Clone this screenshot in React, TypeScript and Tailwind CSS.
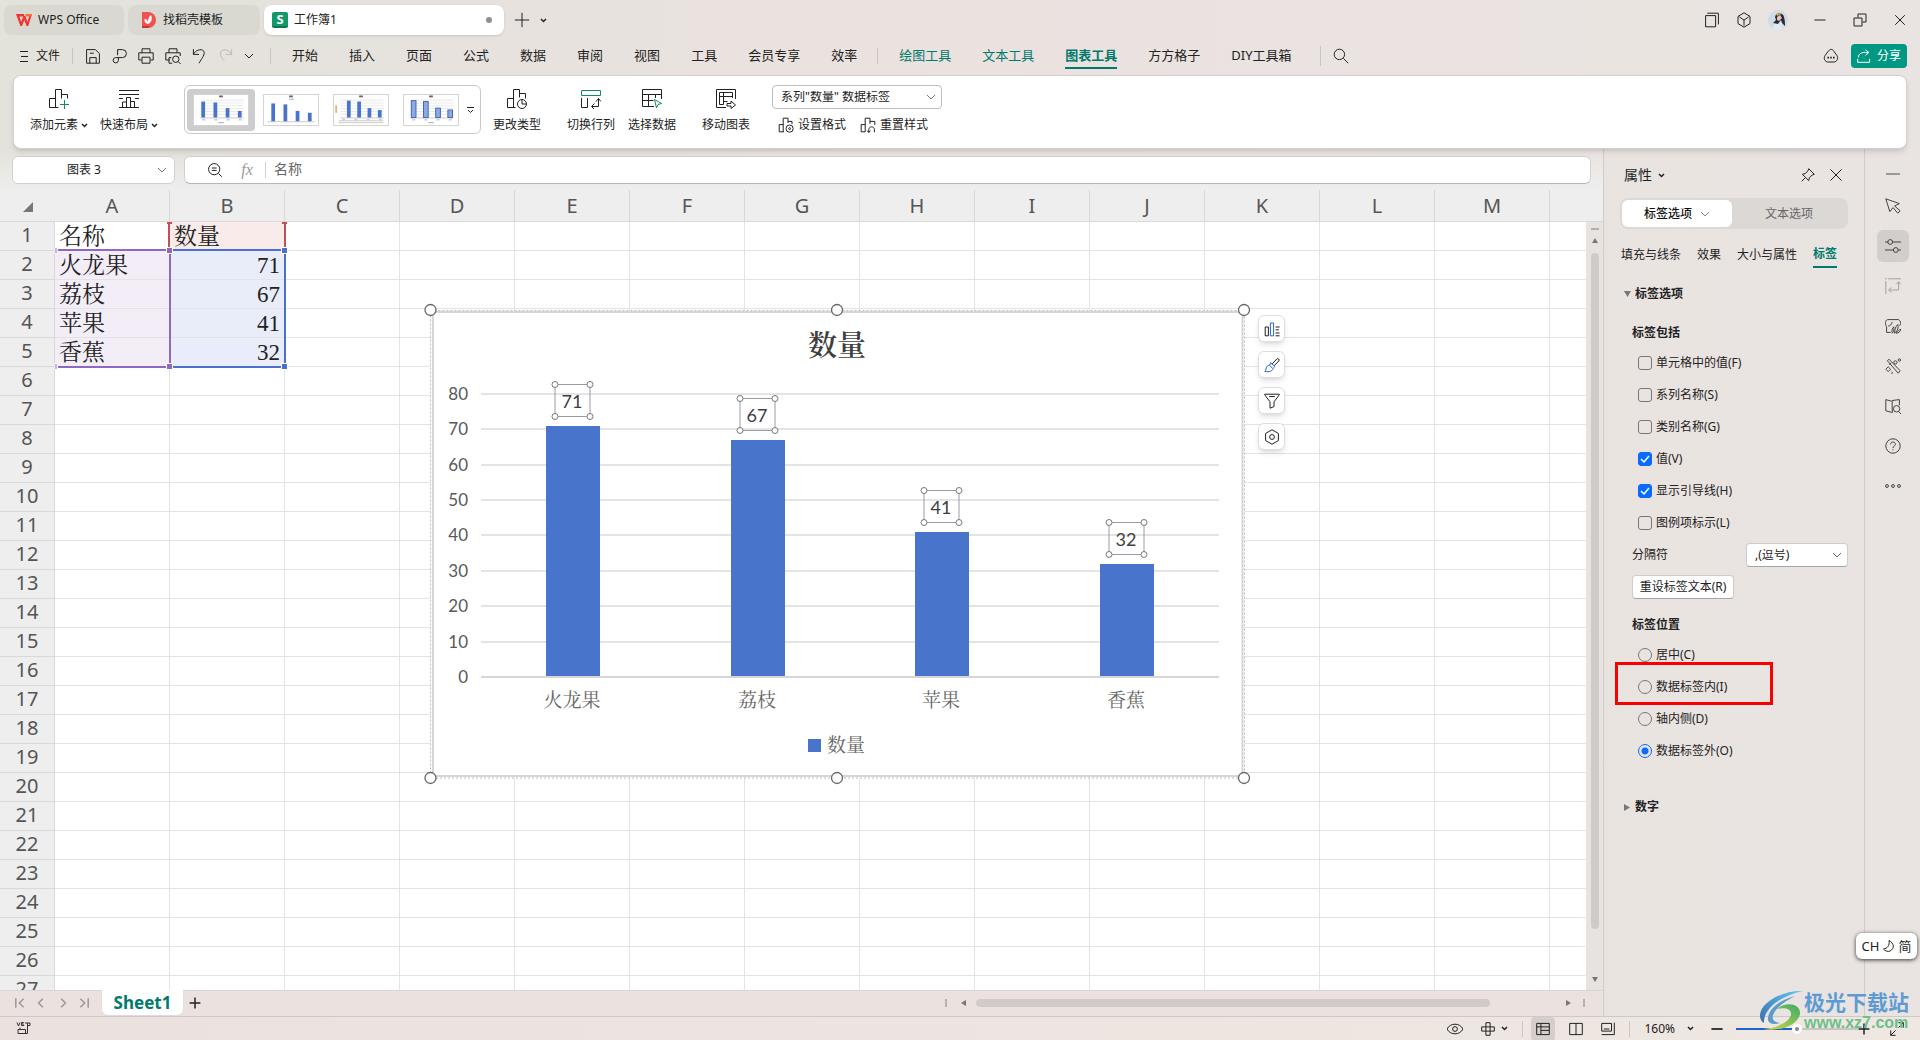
import { useState } from 'react';
import type { ReactNode } from 'react';

const columns = ['A', 'B', 'C', 'D', 'E', 'F', 'G', 'H', 'I', 'J', 'K', 'L', 'M'];
const rowNumbers = Array.from({ length: 27 }, (_, i) => i + 1);

const fruits = [
  { name: '火龙果', value: 71 },
  { name: '荔枝', value: 67 },
  { name: '苹果', value: 41 },
  { name: '香蕉', value: 32 },
];

interface IconProps {
  size?: number;
  className?: string;
  children: ReactNode;
}

function Icon({ size = 20, className = '', children }: IconProps) {
  return (
    <svg
      width={size}
      height={size}
      viewBox="0 0 20 20"
      fill="none"
      stroke="currentColor"
      strokeWidth={20 / size}
      className={`shrink-0 ${className}`}
      aria-hidden="true"
    >
      {children}
    </svg>
  );
}

function Chevron({ className = '' }: { className?: string }) {
  return (
    <svg width="10" height="6" viewBox="0 0 10 6" fill="none" stroke="currentColor" className={`shrink-0 ${className}`} aria-hidden="true">
      <path d="M1 1l4 4 4-4" />
    </svg>
  );
}

function SmallChevron({ className = '' }: { className?: string }) {
  return (
    <svg width="7" height="5" viewBox="0 0 7 5" fill="none" stroke="currentColor" strokeWidth="1.5" className={`shrink-0 ${className}`} aria-hidden="true">
      <path d="M1 1l2.500 2.500L6 1" />
    </svg>
  );
}

function TitleBar() {
  return (
    <div className="flex h-10 items-center pr-3 pl-1 text-xs">
      <button className="flex h-[30px] w-[120px] items-center gap-1.5 rounded-lg bg-[#d9d8d1] pl-3">
        <svg width="16" height="12" viewBox="0 0 16 12" aria-hidden="true">
          <path d="M0 0h8v2.4H3.4L5.2 8 7.4 2h2l2 6L14 0h2l-3.8 12h-1.6L8.3 6 6 12H4.4z" fill="#f5312f" />
          <path d="M9.2 0H16l-.8 2.4H10z" fill="#ff6a3d" />
        </svg>
        WPS Office
      </button>
      <button className="ml-1 flex h-[30px] w-[132px] items-center gap-[7px] rounded-lg bg-[#d9d8d1] pl-[13px]">
        <svg width="15" height="16" viewBox="0 0 15 16" aria-hidden="true">
          <path d="M1 0h6a8 8 0 0 1 0 16H1z" fill="#f0524f" />
          <path d="M1 14h8l-2 2H1z" fill="#c93438" />
          <path d="M7 12C3.500 11 3 8.500 4 6.500c1.500 1 2.500 2 3 3.500 0-2.500.5-5 3-7 1.500 3.500 1 7-3 9z" fill="#fff" />
        </svg>
        找稻壳模板
      </button>
      <button className="ml-1 flex h-[30px] w-[240px] items-center gap-1.5 rounded-lg bg-white pr-3 pl-2 shadow-sm">
        <span className="flex size-4 items-center justify-center rounded-xs border-b-2 border-[#0b7a4f] bg-[#129968] text-[13px] leading-none font-bold text-white">S</span>
        工作簿1
        <span className="ml-auto size-1.5 rounded-full bg-[#8f8f8f]" />
      </button>
      <button aria-label="新建标签" className="ml-2 p-0.5">
        <Icon size={16}><path d="M10 1v18M1 10h18" /></Icon>
      </button>
      <button aria-label="标签列表" className="ml-2"><SmallChevron /></button>

      <div className="ml-auto flex items-center">
        <button aria-label="窗口"><Icon size={16}><path d="M2 4.500h12.500v14H2zM4 1.500h14v14" /></Icon></button>
        <button aria-label="应用" className="ml-4"><Icon size={16}><path d="M10 1l7.500 4.500v9L10 19l-7.500-4.500v-9zM4 6l6 4 6-4M10 10v7" /></Icon></button>
        <button aria-label="用户" className="ml-4">
          <svg width="20" height="20" viewBox="0 0 20 20" className="overflow-hidden rounded-full" aria-hidden="true">
            <rect width="20" height="20" fill="#cddde6" />
            <path d="M4 20l3-9 6-1 2 10z" fill="#dfeaf0" />
            <path d="M7 7c1-5 8-5 9 0 1 4 1 7 1 9l-3-3-1-3-3 4-5-1 3-3z" fill="#2f2935" />
            <path d="M9 7l3-2 2 3-3 3-2-1z" fill="#e9c4b4" />
            <path d="M8 4l4-1 2 1-5 2z" fill="#c9a04e" />
          </svg>
        </button>
        <button aria-label="最小化" className="ml-6"><Icon size={16}><path d="M3 10h14" /></Icon></button>
        <button aria-label="还原" className="ml-6"><Icon size={16}><path d="M2.500 7.500h10v10h-10zM7.500 7V2.500h10v10H13" /></Icon></button>
        <button aria-label="关闭" className="ml-6"><Icon size={16}><path d="M4 4l12 12M16 4L4 16" /></Icon></button>
      </div>
    </div>
  );
}

const menuItems = ['开始', '插入', '页面', '公式', '数据', '审阅', '视图', '工具', '会员专享', '效率'];

function MenuBar() {
  return (
    <div className="flex h-[31px] items-center pr-[13px] pl-5 text-[13px]">
      <button className="flex items-center gap-2 text-xs">
        <svg width="8" height="12" viewBox="0 0 8 12" stroke="currentColor" aria-hidden="true"><path d="M0 1.500h8M1 6.500h7M0 11.500h8" /></svg>
        文件
      </button>
      <span className="ml-3 h-4 w-px bg-[#c8c4c0]" />
      <div className="ml-3 flex w-[169px] items-center justify-between">
        <button aria-label="保存"><Icon size={16}><path d="M2 2h11l5 5v12H2zM6 19v-7h8v7M6 6.500h5" /></Icon></button>
        <button aria-label="输出"><Icon size={16}><path d="M7 9V2h6a5 5 0 0 1 0 10H4.500a3.300 3.300 0 1 0 3.500 3.500V12" /></Icon></button>
        <button aria-label="打印"><Icon size={16}><path d="M5 6V1h10v5M4.500 15H1V6h18v9h-3.500M5 11.500h10V19H5z" /></Icon></button>
        <button aria-label="打印预览"><Icon size={16}><path d="M5 6V1h10v5M6 15H1V6h18v4M9 19H5v-7h3" /><circle cx="13.500" cy="14" r="4" /><path d="M16.500 17l3 3" /></Icon></button>
        <button aria-label="撤销"><Icon size={16}><path d="M3 1.500V8h7M3 8c2-5 10-8 13-4 2 4-2 8-6 15" /></Icon></button>
        <button aria-label="恢复" className="text-[#bdb9b6]"><Icon size={16}><path d="M17 1.500V8h-7M17 8C15 3 7 0 4 4c-2 4 0 8 4 12" /></Icon></button>
        <button aria-label="更多"><Chevron /></button>
      </div>
      <span className="ml-4 h-4 w-px bg-[#c8c4c0]" />
      <nav className="ml-[21px] flex items-center gap-[31px] whitespace-nowrap">
        {menuItems.map((item) => (
          <button key={item}>{item}</button>
        ))}
      </nav>
      <span className="ml-5 h-4 w-px bg-[#c8c4c0]" />
      <nav className="ml-[21px] flex items-center gap-[31px] whitespace-nowrap">
        <button className="text-[#007a6b]">绘图工具</button>
        <button className="text-[#007a6b]">文本工具</button>
        <button className="border-y-2 border-t-transparent border-b-[#007a6b] pt-0.5 pb-0.5 font-bold text-[#007a6b]">图表工具</button>
        <button>方方格子</button>
        <button>DIY工具箱</button>
      </nav>
      <span className="ml-7 h-5 w-px bg-[#c8c4c0]" />
      <button aria-label="搜索" className="ml-3">
        <Icon size={16}><circle cx="8" cy="8" r="6.500" /><path d="M13 13l6 6" /></Icon>
      </button>
      <button aria-label="云同步" className="ml-auto">
        <Icon size={16}><path d="M7 3.500c2-2.500 5-2.500 6.500.5l4 5.500c2 3.500 0 7.500-3.500 8H6c-4-.5-5.500-4.500-3.500-8z" /><path d="M5.500 12h2M9 12h2M12.500 12h2" strokeWidth="2" /></Icon>
      </button>
      <button className="ml-3 flex h-6 w-14 items-center justify-center gap-1.5 rounded bg-[#009882] text-xs text-white">
        <Icon size={14}><path d="M2 12c0-5 4-8 14-7M12 1l5 4-5 4M1 14v5h17v-5" /></Icon>
        分享
      </button>
    </div>
  );
}

function RibbonButton({ label, icon, menu }: { label: string; icon: ReactNode; menu?: boolean }) {
  return (
    <button className="flex flex-col items-center gap-[7px] whitespace-nowrap text-xs leading-[18px]">
      {icon}
      <span className="flex items-center gap-[3px]">
        {label}
        {menu && <SmallChevron />}
      </span>
    </button>
  );
}

function Divider() {
  return <span className="h-[66px] w-px bg-[#dcdcdc]" />;
}

const thumbBars: Record<number, number[]> = {
  0: [17, 16, 10, 7],
  1: [19, 18, 11, 9],
  2: [18, 17, 10, 8],
  3: [18, 17, 10, 8],
};

function Thumb({ kind }: { kind: number }) {
  return (
    <svg width="56" height="32" viewBox="0 0 56 32" className="border border-[#d4d4d4] bg-white" aria-hidden="true">
      <path d="M26 1.500h4" stroke="#666" strokeWidth="2" />
      {kind !== 1 && <path d="M6 5.500h46M6 8.500h46M6 11.500h46M6 14.500h46M6 17.500h46M6 20.500h46" stroke="#e6e6e6" />}
      {kind === 2 && <path d="M1.500 11v8" stroke="#d9b98a" strokeWidth="2" />}
      <path d={kind === 1 ? 'M3 28.500h50' : 'M6 24.500h46'} stroke="#c9c9c9" />
      {thumbBars[kind].map((h, i) => (
        <rect
          key={i}
          x={(kind === 2 ? 13 : 7) + i * (kind === 2 ? 11 : 13)}
          y={(kind === 1 ? 28 : 24) - h}
          width={kind === 3 ? 5 : 4}
          height={h}
          fill={kind === 3 ? '#8fa9e2' : '#4874cb'}
          stroke={kind === 3 ? '#3b64b5' : 'none'}
        />
      ))}
      {kind !== 1 && <path d="M8 26.500h3M21 26.500h3M34 26.500h3M47 26.500h3" stroke="#aaa" />}
      {kind === 2 && <path d="M4 27.500h48M4 29.500h48" stroke="#c9c9c9" />}
      {kind !== 2 && <path d={kind === 1 ? 'M26 4.500h5' : 'M25 29.500h6'} stroke="#9aa4b8" />}
    </svg>
  );
}

function Ribbon() {
  return (
    <div className="relative z-10 mx-[13px] mt-1 flex h-[74px] items-start rounded-lg border border-[#d5d0cd] bg-white pt-[3px] shadow-md">
      <div className="flex gap-3 pt-2.5 pl-4">
        <RibbonButton label="添加元素" menu icon={<Icon><path d="M.500 9.500h6v9M.500 9.500v9h9M6.500 18.500V.500h6v9M12.500 5.500h6v4" /><path d="M15.500 11v9M11 15.500h9" stroke="#128a62" /></Icon>} />
        <RibbonButton label="快速布局" menu icon={<Icon><path d="M0 1.500h20M0 5.500h20M0 9.500h4M16 9.500h4M0 18.500h20M3.500 18v-5h4M7.500 18V8.500h4V18M11.500 12.500h4V18" /></Icon>} />
      </div>
      <span className="ml-[13px]"><Divider /></span>
      <div className="mt-1.5 ml-[13px] flex h-[49px] items-center rounded-md border border-[#c9c9c9] pr-1.5 pl-0.5">
        {[0, 1, 2, 3].map((kind) => (
          <button key={kind} aria-label={`样式 ${kind + 1}`} className={`mr-0.5 rounded px-1.5 py-[5px] ${kind === 0 ? 'bg-[#cdcdcd]' : ''}`}>
            <Thumb kind={kind} />
          </button>
        ))}
        <button aria-label="更多样式">
          <svg width="7" height="8" viewBox="0 0 7 8" fill="none" stroke="currentColor" aria-hidden="true"><path d="M0 1.500h7M1 4l2.500 2.500L6 4" /></svg>
        </button>
      </div>
      <div className="ml-3 pt-2.5">
        <RibbonButton label="更改类型" icon={<Icon><path d="M.500 9.500h6v9M.500 9.500v9h8M6.500 18.500V.500h6v8M12.500 4.500h6v5" /><circle cx="15" cy="15" r="4.500" /><path d="M15 10.500V15h4.500" /></Icon>} />
      </div>
      <span className="ml-[13px]"><Divider /></span>
      <div className="flex gap-[13px] pt-2.5 pl-[13px]">
        <RibbonButton label="切换行列" icon={<Icon><path d="M.500 1.500h19v5H.500z" stroke="#128a62" /><path d="M.500 9v9.500h6V9M11 17.500h6.500V10M13.500 14.500l-3 3 3 3M15 12.500l2.500-3 2.500 3" /></Icon>} />
        <RibbonButton label="选择数据" icon={<Icon><path d="M12 17.500H.500v-17h19V10M.500 5.500h19M.500 11.500h11M6.500 5.500v12M13.500 5.500V9" /><path d="M12.500 10.500l7 4-3.500 1-1.500 3.500z" stroke="#128a62" /></Icon>} />
      </div>
      <span className="ml-[13px]"><Divider /></span>
      <div className="pt-2.5 pl-[13px]">
        <RibbonButton label="移动图表" icon={<Icon><path d="M10 18.500H.500V.500h19V10M3.500 15.500v-12h13v4h-13M7.500 3.500v12h-4M7.500 12.500h4M16.500 7v2" /><path d="M11 14.500h4V12l4.500 4-4.500 3.500V17h-4z" /></Icon>} />
      </div>
      <span className="ml-[13px]"><Divider /></span>
      <div className="pt-1.5 pl-[9px]">
        <div className="grid w-[170px] items-center">
          <select aria-label="图表元素" className="col-start-1 row-start-1 h-6 appearance-none rounded border border-[#bdbdbd] bg-white pl-2 text-xs leading-none">
            <option>系列"数量" 数据标签</option>
          </select>
          <Chevron className="pointer-events-none col-start-1 row-start-1 mr-1.5 justify-self-end text-[#777]" />
        </div>
        <div className="mt-[7px] flex gap-3.5 pl-1.5 text-xs leading-[18px]">
          <button className="flex items-center gap-1">
            <Icon size={16}><path d="M6.500 9.500h-5v9h6M6.500 18.500V1.500h6v6M12.500 5.500h5V9" /><circle cx="14.500" cy="14.500" r="4.500" /><circle cx="14.500" cy="14.500" r="1.200" /></Icon>
            设置格式
          </button>
          <button className="flex items-center gap-1">
            <Icon size={16}><path d="M6.500 9.500h-5v9h5M6.500 18.500V1.500h6v7M12.500 5.500h6V10M11 19v-3c0-5 7-5 7 0v3M9 17l2 2.500 2-2.500" /></Icon>
            重置样式
          </button>
        </div>
      </div>
    </div>
  );
}

function FormulaRow() {
  return (
    <div className="flex h-[41px] shrink-0 items-center gap-[9px] bg-linear-to-b from-transparent to-[#eee] px-3">
      <div className="flex h-7 w-[163px] items-center rounded-md border border-[#d3d0cd] bg-white pr-[7px]">
        <input aria-label="名称框" defaultValue="图表 3" className="w-full min-w-0 bg-transparent pr-0.5 text-center text-xs outline-none" />
        <Chevron className="text-[#777]" />
      </div>
      <div className="flex h-7 flex-1 items-center rounded-md border border-[#d3d0cd] border-b-[#b5b8b5] bg-white pl-[22px]">
        <button aria-label="查找">
          <Icon size={16}><circle cx="9" cy="9" r="7" /><path d="M14.500 14.500l4 4M6 7.500h6M6 10.500h6" /></Icon>
        </button>
        <button className="ml-4 w-4 font-['Liberation_Serif',serif] text-base leading-none text-[#999] italic">fx</button>
        <span className="ml-2.5 h-4 w-px bg-[#d0d0d0]" />
        <input aria-label="编辑栏" defaultValue="名称" className="ml-2 h-6 flex-1 bg-transparent pb-1 text-sm text-[#666] outline-none" />
      </div>
    </div>
  );
}

function ResizeHandle({ x, y }: { x: number; y: number }) {
  return <circle cx={x} cy={y} r="5.500" fill="#fff" stroke="#666" strokeWidth="1.300" />;
}

function Chart() {
  const baseline = 375;
  const left = 59;
  const right = 797;
  const unit = 3.54;
  const slot = (right - left) / fruits.length;

  return (
    <svg width="830" height="484" viewBox="0 0 830 484" className="absolute top-[112px] left-[422px]" role="img" aria-label="数量">
      <rect x="8.500" y="8.500" width="814" height="467.500" fill="#fff" stroke="#bdbdbd" strokeDasharray="2 2" />
      <rect x="11" y="10" width="809.500" height="464" fill="#fff" stroke="#d6d6d6" strokeWidth="2" />
      <text x="415" y="54" textAnchor="middle" fontSize="29" fontWeight="600" fill="#404040" fontFamily="'Noto Serif CJK SC','Noto Sans CJK SC',serif">数量</text>

      {[0, 10, 20, 30, 40, 50, 60, 70, 80].map((tick) => (
        <g key={tick}>
          <rect x={left} y={Math.round(baseline - tick * unit) - 1} width={right - left} height="2" fill={tick ? '#e4e4e4' : '#d6d6d6'} />
          <text x="46" y={Math.round(baseline - tick * unit) + 6} textAnchor="end" fontSize="17" fill="#595959" fontFamily="Lato,sans-serif">{tick}</text>
        </g>
      ))}

      {fruits.map((fruit, i) => {
        const center = Math.round(left + slot * (i + 0.5));
        const top = Math.round(baseline - fruit.value * unit);
        return (
          <g key={fruit.name}>
            <rect x={center - 27} y={top} width="54" height={baseline - 1 - top} fill="#4874cb" />
            <rect x={center - 18} y={top - 41.5} width="35" height="32" fill="none" stroke="#9a9aa6" />
            {[-18, 17].map((dx) =>
              [-41.5, -9.5].map((dy) => (
                <circle key={`${dx}${dy}`} cx={center + dx} cy={top + dy} r="3" fill="#fff" stroke="#777" />
              ))
            )}
            <text x={center - 1} y={top - 18} textAnchor="middle" fontSize="18" fill="#404040" fontFamily="Lato,sans-serif">{fruit.value}</text>
            <text x={center - 1} y="405" textAnchor="middle" fontSize="19" fill="#666" fontFamily="'Noto Serif CJK SC','Noto Sans CJK SC',serif">{fruit.name}</text>
          </g>
        );
      })}

      <rect x="386" y="437" width="13" height="13" fill="#4874cb" />
      <text x="405" y="450" fontSize="19" fill="#666" fontFamily="'Noto Serif CJK SC','Noto Sans CJK SC',serif">数量</text>

      {[8.5, 415, 822].map((x) => (
        <g key={x}>
          <ResizeHandle x={x} y={8} />
          <ResizeHandle x={x} y={476} />
        </g>
      ))}
    </svg>
  );
}

function ChartTools() {
  const button = 'flex size-[27px] items-center justify-center rounded-md border border-[#dedede] bg-white shadow-md';
  return (
    <div className="absolute top-[125px] left-[1258px] flex flex-col gap-[9px]">
      <button aria-label="图表元素" className={button}>
        <Icon size={16}><path d="M1.500 7.500h4v11h-4z" /><path d="M8 2.500h4v16H8z" stroke="#2b5fd9" /><path d="M14.500 7.500h5M14.500 11h4M14.500 15h5M14.500 18.500h5" /></Icon>
      </button>
      <button aria-label="图表样式" className={button}>
        <Icon size={16}><path d="M10 9l6-6.500c1.500-1.500 4 .5 2.500 2.500L12.500 11" /><path d="M8.500 7l5 5-2 2c-1 4-5 5-10.500 4 2-1 1-4 2.500-6 1-1.500 2.500-2 3.500-1.500zM7 10.500l3.500 3.500" stroke="#2b5fd9" /></Icon>
      </button>
      <button aria-label="图表筛选" className={button}>
        <Icon size={16}><path d="M1 1.500h18v1L12.500 11v6l-5 2v-8L1 2.500zM6.500 4.500h7" /></Icon>
      </button>
      <button aria-label="图表设置" className={button}>
        <Icon size={16}><path d="M10 1l8 4.500v9L10 19l-8-4.500v-9z" /><circle cx="10" cy="10" r="3" /></Icon>
      </button>
    </div>
  );
}

function RangeOutlines() {
  return (
    <svg width="290" height="184" className="pointer-events-none absolute top-0 left-0" aria-hidden="true">
      <path d="M169 34v26M285 34v26" stroke="#c44f52" strokeWidth="2" />
      <path d="M167 33h5M282 33h5" stroke="#c44f52" strokeWidth="2" />
      <path d="M58 60h111M170 60v116M58 177h111" stroke="#8f68bf" strokeWidth="2" />
      <path d="M173 60h109M285 63v111M173 177h109" stroke="#4a6fd0" strokeWidth="2" />
      <path d="M55 57.500h2v6h-2zM55 173.500h2v6h-2zM166.500 57.500h6v6h-6zM166.500 173.500h6v6h-6z" fill="#8f68bf" stroke="#fff" />
      <path d="M281.500 57.500h6v6h-6zM281.500 173.500h6v6h-6z" fill="#4a6fd0" stroke="#fff" />
    </svg>
  );
}

function cellText(column: string, row: number) {
  if (row === 1) return column === 'A' ? '名称' : column === 'B' ? '数量' : '';
  const fruit = fruits[row - 2];
  if (!fruit) return '';
  return column === 'A' ? fruit.name : column === 'B' ? fruit.value : '';
}

function cellStyle(column: string, row: number) {
  if (column === 'B' && row === 1) return 'bg-[#f8ebea]';
  if (row < 2 || row > 5) return '';
  if (column === 'A') return 'bg-[#f3edf8]';
  return column === 'B' ? 'bg-[#e9edfa] text-right' : '';
}

function Sheet() {
  return (
    <div className="flex min-h-0 flex-1">
      <div className="relative min-w-0 flex-1 overflow-hidden bg-white">
        <table className="w-full table-fixed border-separate border-spacing-0">
          <colgroup>
            <col className="w-[55px]" />
            {columns.map((c) => (
              <col key={c} className="w-[115px]" />
            ))}
            <col />
          </colgroup>
          <thead>
            <tr className="h-8 bg-[#eee] text-xl leading-[30px] text-[#555]">
              <th aria-label="全选" className="border-b border-[#d9d9d9] p-0">
                <svg width="10" height="10" viewBox="0 0 10 10" className="mt-0.5 ml-[23px]" aria-hidden="true"><path d="M10 0v10H0z" fill="#777" /></svg>
              </th>
              {columns.map((c) => (
                <th key={c} scope="col" className="border-r border-b border-[#d9d9d9] p-0 font-normal">{c}</th>
              ))}
              <th aria-label="N" className="border-b border-[#d9d9d9] p-0" />
            </tr>
          </thead>
          <tbody>
            {rowNumbers.map((row) => (
              <tr key={row} className="h-[29px]">
                <th scope="row" className="border-r border-b border-[#d9d9d9] bg-[#eee] p-0 pb-0.5 text-xl leading-[26px] font-normal text-[#555]">{row}</th>
                {columns.map((c) => (
                  <td
                    key={c}
                    className={`border-r border-b border-[#e3e3e3] p-0 pt-0.5 pr-1 pl-1 font-['Liberation_Serif','Noto_Serif_CJK_SC','Noto_Sans_CJK_SC',serif] text-[23px] leading-[26px] ${cellStyle(c, row)}`}
                  >
                    {cellText(c, row)}
                  </td>
                ))}
                <td className="border-b border-[#e3e3e3] p-0" />
              </tr>
            ))}
          </tbody>
        </table>
        <RangeOutlines />
        <Chart />
        <ChartTools />
      </div>

      <div className="flex w-[17px] flex-col items-center bg-[#eee]">
        <span className="h-8 w-full border-b border-[#d9d9d9]" />
        <div className="flex w-full flex-1 flex-col items-center bg-[#e9e3e0] pt-1.5 pb-2">
          <span className="h-0.5 w-2 bg-[#b5b1ae]" />
          <svg width="6" height="5" viewBox="0 0 6 5" className="mt-2" aria-hidden="true"><path d="M3 0l3 5H0z" fill="#777" /></svg>
          <span className="mt-2.5 mb-12 w-2 flex-1 rounded-full bg-[#d0cbc8]" />
          <svg width="6" height="5" viewBox="0 0 6 5" aria-hidden="true"><path d="M0 0h6L3 5z" fill="#777" /></svg>
        </div>
      </div>
    </div>
  );
}

function SheetTabs() {
  return (
    <div className="flex h-[26px] shrink-0 items-start border-t border-[#d9d5d2] bg-[#ebe2e0] pl-3.5">
      <div className="flex h-6 w-[76px] items-center justify-between text-[#999]">
        <button aria-label="第一个"><Icon size={12}><path d="M3 2v16M16 3L9 10l7 7" strokeWidth="2.500" /></Icon></button>
        <button aria-label="上一个"><Icon size={12}><path d="M13 3l-7 7 7 7" strokeWidth="2.500" /></Icon></button>
        <button aria-label="下一个"><Icon size={12}><path d="M7 3l7 7-7 7" strokeWidth="2.500" /></Icon></button>
        <button aria-label="最后一个"><Icon size={12}><path d="M17 2v16M4 3l7 7-7 7" strokeWidth="2.500" /></Icon></button>
      </div>
      <button className="-mt-px ml-3 h-[25px] w-[81px] rounded-b-md bg-white text-[17px] leading-6 font-bold text-[#007a6b] shadow-xs">Sheet1</button>
      <button aria-label="新建工作表" className="mt-1.5 ml-1.5"><Icon size={12}><path d="M10 1v18M1 10h18" strokeWidth="2.500" /></Icon></button>
      <div className="ml-auto flex h-6 w-[658px] items-center pr-[18px]">
        <span className="h-2 w-0.5 bg-[#b5b1ae]" />
        <svg width="5" height="6" viewBox="0 0 5 6" className="ml-3.5" aria-hidden="true"><path d="M5 0v6L0 3z" fill="#777" /></svg>
        <span className="mr-[76px] ml-2.5 h-2 flex-1 rounded-full bg-[#d0cbc8]" />
        <svg width="5" height="6" viewBox="0 0 5 6" aria-hidden="true"><path d="M0 0v6l5-3z" fill="#777" /></svg>
        <span className="ml-3 h-2 w-0.5 bg-[#b5b1ae]" />
      </div>
    </div>
  );
}

function CheckRow({ label, defaultChecked }: { label: string; defaultChecked?: boolean }) {
  return (
    <label className="flex h-8 items-center gap-1">
      <span className="grid place-items-center">
        <input
          type="checkbox"
          defaultChecked={defaultChecked}
          className="peer col-start-1 row-start-1 size-3.5 appearance-none rounded-[3px] border border-[#777] checked:border-[#0a6cff] checked:bg-[#0a6cff]"
        />
        <svg width="10" height="8" viewBox="0 0 10 8" fill="none" stroke="#fff" strokeWidth="1.500" className="pointer-events-none invisible col-start-1 row-start-1 peer-checked:visible" aria-hidden="true">
          <path d="M1 4l3 3 5-6" />
        </svg>
      </span>
      {label}
    </label>
  );
}

function PropertiesPanel() {
  const [position, setPosition] = useState('数据标签外(O)');
  const checks = [
    { label: '单元格中的值(F)' },
    { label: '系列名称(S)' },
    { label: '类别名称(G)' },
    { label: '值(V)', on: true },
    { label: '显示引导线(H)', on: true },
    { label: '图例项标示(L)' },
  ];

  return (
    <aside className="w-[261px] shrink-0 border-l border-[#d0ccc9] px-4 text-xs">
      <div className="flex h-[49px] items-center pt-[3px] pr-[5px] pl-1">
        <button className="flex items-center gap-1.5 text-sm">属性 <SmallChevron /></button>
        <button aria-label="固定" className="ml-auto"><Icon size={14}><path d="M11 1l8 8-3 1-4 4-1 4-9-9 4-1 4-4zM6 14l-5 5" /></Icon></button>
        <button aria-label="关闭" className="ml-3.5"><Icon size={14}><path d="M2 2l16 16M18 2L2 18" /></Icon></button>
      </div>

      <div className="flex h-[31px] rounded-lg bg-[#dcd8d5] p-0.5">
        <button className="flex w-[110px] items-center justify-center gap-2 rounded-md bg-white font-medium text-[#111]">
          标签选项 <Chevron className="text-[#888]" />
        </button>
        <button className="flex-1 text-[#666]">文本选项</button>
      </div>

      <div className="mt-[13px] flex gap-4 pl-px leading-6 whitespace-nowrap">
        <button>填充与线条</button>
        <button>效果</button>
        <button>大小与属性</button>
        <button className="border-b-2 border-[#007a6b] font-bold text-[#007a6b]">标签</button>
      </div>

      <button className="mt-4 flex h-5 items-center gap-1 pl-1 font-bold">
        <svg width="7" height="6" viewBox="0 0 7 6" aria-hidden="true"><path d="M0 0h7L3.500 6z" fill="#777" /></svg>
        标签选项
      </button>
      <h3 className="mt-[19px] pl-3 leading-5 font-bold">标签包括</h3>
      <div className="mt-1 pl-[18px]">
        {checks.map((c) => (
          <CheckRow key={c.label} label={c.label} defaultChecked={c.on} />
        ))}
      </div>

      <div className="flex h-8 items-center justify-between pl-3">
        <label htmlFor="separator">分隔符</label>
        <div className="grid w-[102px] items-center">
          <select id="separator" className="col-start-1 row-start-1 h-6 appearance-none rounded border border-[#cfcbc8] border-b-[#a5a5a5] bg-white pl-2 text-xs leading-none">
            <option>,(逗号)</option>
          </select>
          <Chevron className="pointer-events-none col-start-1 row-start-1 mr-1.5 justify-self-end text-[#666]" />
        </div>
      </div>
      <button className="mt-1 ml-3 flex h-6 w-[102px] items-center justify-center rounded border border-[#cfcbc8] border-b-[#a5a5a5] bg-white whitespace-nowrap">
        重设标签文本(R)
      </button>

      <h3 className="mt-4 pl-3 leading-5 font-bold">标签位置</h3>
      <div className="mt-1 pl-[18px]">
        {['居中(C)', '数据标签内(I)', '轴内侧(D)', '数据标签外(O)'].map((name) => (
          <label key={name} className="relative flex h-8 items-center gap-1">
            <input
              type="radio"
              name="label-position"
              checked={position === name}
              onChange={() => setPosition(name)}
              className="size-3.5 appearance-none rounded-full border border-[#777] checked:border-[#0a6cff] checked:bg-[radial-gradient(circle,#0a6cff_3px,transparent_4px)]"
            />
            {name}
            {name === '数据标签内(I)' && (
              <span className="pointer-events-none absolute -top-[9px] -left-[23px] h-[43px] w-[158px] border-[3px] border-[#fb0000]" />
            )}
          </label>
        ))}
      </div>

      <button className="mt-[30px] flex h-5 items-center gap-[5px] pl-1 font-bold">
        <svg width="6" height="7" viewBox="0 0 6 7" aria-hidden="true"><path d="M0 0v7l6-3.500z" fill="#777" /></svg>
        数字
      </button>
    </aside>
  );
}

function SideBar() {
  const button = 'flex size-8 items-center justify-center rounded-md';
  return (
    <div className="flex w-14 shrink-0 flex-col items-center gap-2 border-l border-[#d0ccc9] pt-3.5 text-[#444]">
      <button aria-label="收起" className="flex h-[19px] items-center pt-0.5"><span className="h-0.5 w-3.5 bg-[#999]" /></button>
      <button aria-label="选择" className={button}><Icon size={16}><path d="M1 1l5 16 4-5 6 7 3-3-7-6 6-3z" /></Icon></button>
      <button aria-label="属性" className={`${button} bg-[#d2cecb]`}><Icon size={16}><path d="M0 5h4M9.500 5H20M0 15h11M16.500 15H20" /><circle cx="6.500" cy="5" r="3" /><circle cx="13.500" cy="15" r="3" /></Icon></button>
      <button aria-label="转换" className={`${button} text-[#a5a19e]`}><Icon size={16}><path d="M4 1h16M1 4v16M0 1h2M5 15h12V5M8 12l-3.500 3L8 18M14 8l3-3.500L20 8" /></Icon></button>
      <button aria-label="图库" className={button}><Icon size={16}><path d="M7 18H2v-7c-2-3-2-8 1-9h14c3 2 3 6 1 8M4 10c3 0 4-2 5-5M9 19c-1-3 0-6 2-8 0 3 1 5-2 8zM12 19c0-4 1-8 4-11 1 4 0 8-4 11zM14 19c2-3 3-4 6-5-1 3-3 5-6 5z" /></Icon></button>
      <button aria-label="工具" className={button}>
        <Icon size={16}>
          <path d="M3 3.500l2-2L19 16l-2.500 3zM7.500 6L5.500 8.500" />
          <circle cx="13" cy="5.500" r="2" />
          <circle cx="18" cy="2.500" r="1.500" />
          <path d="M4 11l3 3-3 3-3-3zM8 17l1.500 1.500L8 20" />
        </Icon>
      </button>
      <button aria-label="文档检索" className={button}><Icon size={16}><path d="M10 17L8.500 18 1 16V2l7 2 2-1 8-1v7M9 4v14" /><circle cx="14.500" cy="13.500" r="4" /><path d="M17 17l3 3" /></Icon></button>
      <button aria-label="帮助" className={button}><Icon size={16}><circle cx="10" cy="10" r="9" /><path d="M7 8c0-4 6-4 6 0 0 2-3 2-3 4.500M10 14v1.500" /></Icon></button>
      <button aria-label="更多" className={button}><Icon size={16}><circle cx="2.500" cy="10" r="1.800" /><circle cx="10" cy="10" r="1.800" /><circle cx="17.500" cy="10" r="1.800" /></Icon></button>
    </div>
  );
}

function StatusBar() {
  return (
    <div className="flex h-6 shrink-0 items-center border-t border-[#d0c8c6] bg-linear-to-r from-[#ebe2e0] to-[#efe7e1] px-4 text-xs">
      <button aria-label="VBA">
        <svg width="16" height="13" viewBox="0 0 16 13" fill="none" stroke="#333" aria-hidden="true">
          <path d="M1 .500L2.500 4 4 .500M5.500.500h2l-1 1.500 1.500 1.500H5.500zM9 1h5v2.500h-3M11.500 1v10.500H2v-4h7.500v4M4 7.500V5.500" />
        </svg>
      </button>
      <div className="ml-auto flex items-center">
        <button aria-label="护眼"><Icon size={16}><path d="M0 10c4-8 16-8 20 0-4 8-16 8-20 0z" /><circle cx="10" cy="10" r="3" /></Icon></button>
        <button aria-label="阅读模式" className="ml-[18px] flex items-center gap-1.5">
          <Icon size={14}><path d="M7 1h6v18H7zM1 7h18v6H1z" /></Icon>
          <SmallChevron />
        </button>
        <span className="ml-3.5 h-4 w-px bg-[#cdc6c3]" />
        <button aria-label="普通视图" className="ml-2 flex size-6 items-center justify-center rounded bg-[#d5cecb]"><Icon size={14}><path d="M1 2h18v16H1zM1 7h18M7 2v16M7 12h12" /></Icon></button>
        <button aria-label="分页预览" className="ml-3.5"><Icon size={14}><path d="M1 2h18v16H1zM10 2v16" /></Icon></button>
        <button aria-label="页面布局" className="ml-[18px]"><Icon size={14}><path d="M1 2h14v11H1zM19 1v17H1M4 10h8" /></Icon></button>
        <span className="ml-3.5 h-4 w-px bg-[#cdc6c3]" />
        <button className="ml-3.5 flex items-center gap-3 text-xs">160% <SmallChevron /></button>
        <button aria-label="缩小" className="ml-4"><Icon size={14}><path d="M2 10h16" strokeWidth="2.500" /></Icon></button>
        <input
          type="range"
          aria-label="缩放"
          defaultValue="50"
          className="ml-3 h-0.5 w-[122px] appearance-none bg-linear-to-r from-[#1d62cf] from-50% to-[#c9c4c1] to-50% [&::-webkit-slider-thumb]:size-2.5 [&::-webkit-slider-thumb]:appearance-none [&::-webkit-slider-thumb]:rounded-full [&::-webkit-slider-thumb]:border-[3px] [&::-webkit-slider-thumb]:border-white [&::-webkit-slider-thumb]:bg-[#888]"
        />
        <button aria-label="放大"><Icon size={12}><path d="M10 1v18M1 10h18" strokeWidth="2.500" /></Icon></button>
        <button aria-label="全屏" className="ml-5"><Icon size={14}><path d="M12 1h7v7M19 1l-7 7M8 19H1v-7M1 19l7-7" /></Icon></button>
      </div>
    </div>
  );
}

function Watermark() {
  return (
    <div className="pointer-events-none absolute right-[11px] bottom-2 flex items-end">
      <svg width="45" height="42" viewBox="0 0 45 42" aria-hidden="true">
        <defs>
          <linearGradient id="blue" x1="0" y1="1" x2="1" y2="0">
            <stop offset="0" stopColor="#3a6fb0" />
            <stop offset="1" stopColor="#62c6f2" />
          </linearGradient>
          <linearGradient id="green" x1="0" y1="1" x2="1" y2="0">
            <stop offset="0" stopColor="#d8d84a" />
            <stop offset="1" stopColor="#3bab62" />
          </linearGradient>
        </defs>
        <path d="M44 1C24 0 2 12 1 25c0 5 2 7 4 8C4 20 20 6 44 1z" fill="url(#blue)" />
        <path d="M36 6C20 10 8 20 9 30c1 4 6 5 12 3-7-1-9-5-6-10C19 16 28 10 36 6z" fill="#5a9bd0" />
        <path d="M18 19c8-8 24-6 23 5C39 34 24 42 4 39c14-1 26-7 28-14 1-6-6-8-14-6z" fill="url(#green)" />
      </svg>
      <div className="flex flex-col whitespace-nowrap">
        <span className="text-[21px] leading-6 font-bold text-[#5f9bd3]">极光下载站</span>
        <span className="font-['Liberation_Sans',sans-serif] text-base leading-[18px] font-bold text-[#6cc08a]">www.xz7.com</span>
      </div>
    </div>
  );
}

export default function App() {
  return (
    <div className="relative flex h-screen flex-col overflow-hidden bg-[#ebe3e0] bg-linear-to-r from-[#e3e2db] via-[#ebe2e0] to-[#e9e4e1] font-['Noto_Sans','Noto_Sans_CJK_SC',sans-serif] text-[#222]">
      <TitleBar />
      <MenuBar />
      <Ribbon />
      <div className="flex min-h-0 flex-1">
        <main className="flex min-w-0 flex-1 flex-col">
          <FormulaRow />
          <Sheet />
          <SheetTabs />
        </main>
        <PropertiesPanel />
        <SideBar />
      </div>
      <StatusBar />
      <button className="absolute right-[3px] bottom-[81px] flex h-[26px] w-[61px] items-center justify-center gap-1 rounded-md bg-white text-[13px] leading-none shadow-[0_1px_4px_#333]">
        CH
        <svg width="11" height="12" viewBox="0 0 11 12" fill="none" stroke="currentColor" aria-hidden="true"><path d="M6 .500c5 2.500 6 8 1 10.500-2 1-5 0-6.500-2C4 8.500 7 6 6 .500z" /></svg>
        简
      </button>
      <Watermark />
    </div>
  );
}
